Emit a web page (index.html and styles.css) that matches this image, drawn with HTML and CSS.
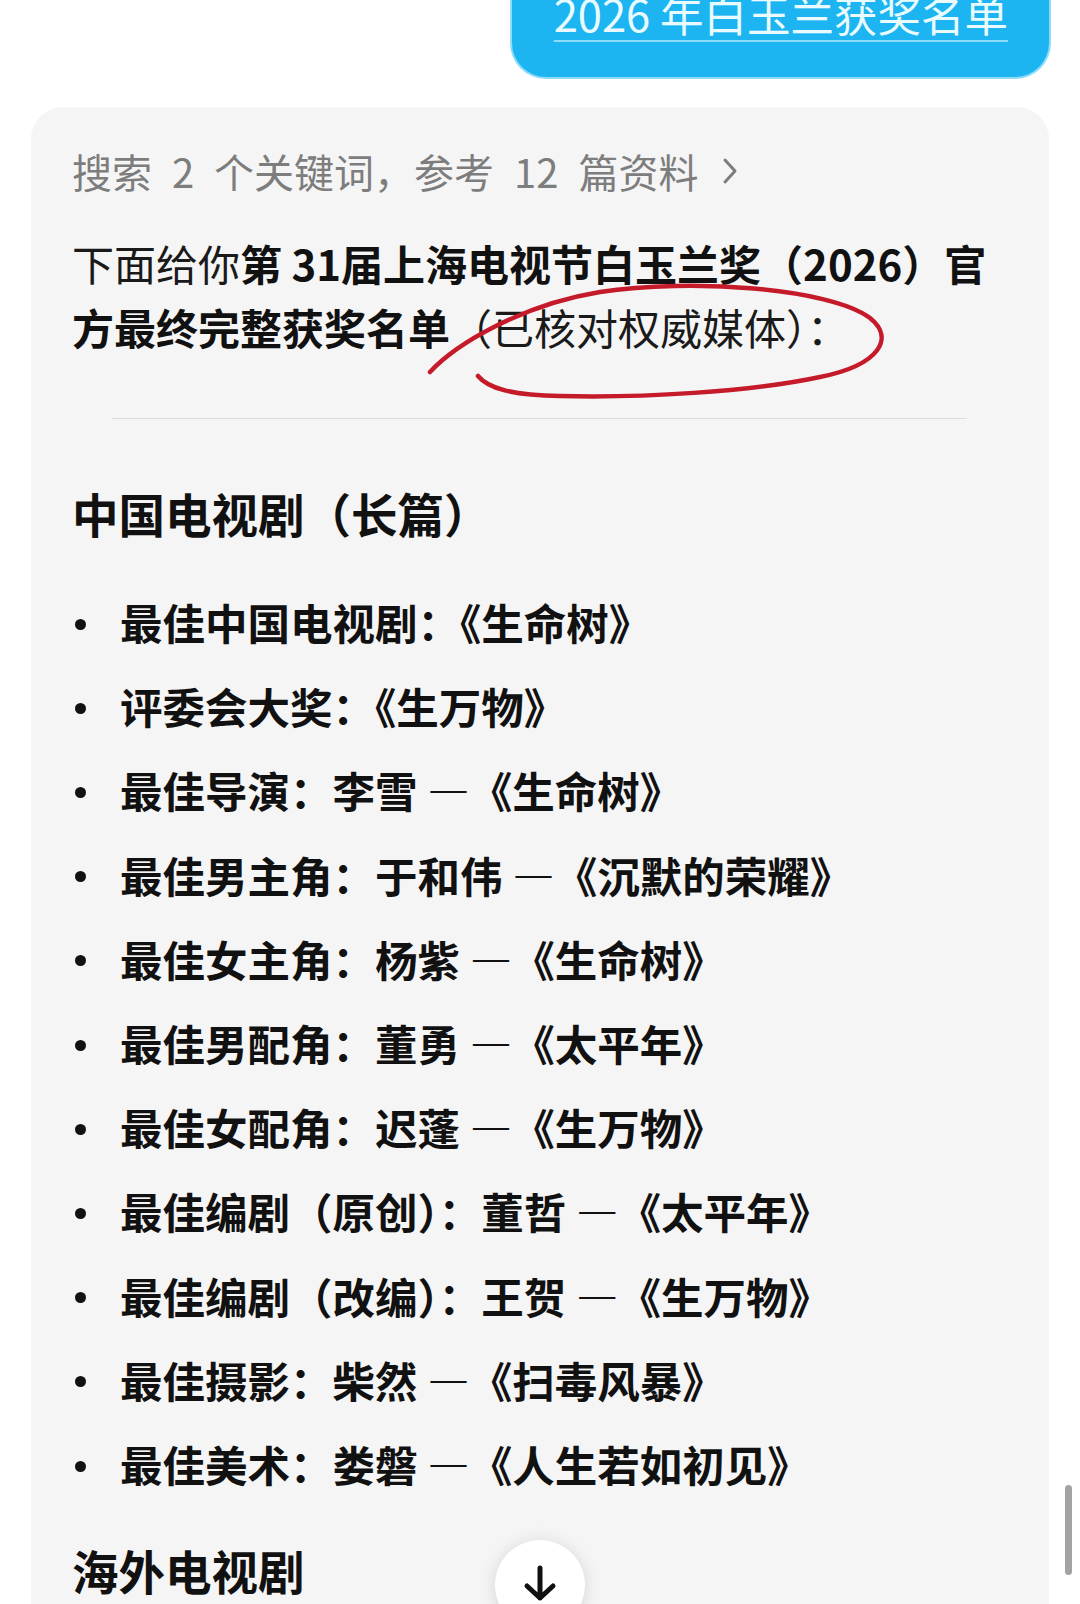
FILE: index.html
```html
<!DOCTYPE html>
<html lang="zh-CN">
<head>
  <meta charset="utf-8">
  <title>白玉兰获奖名单</title>
  <link rel="stylesheet" href="styles.css">
</head>
<body>
  <div class="thread">
    <div class="bubble"><span class="bubble-link">2026 年白玉兰获奖名单</span></div>

    <div class="card">
      <!-- hand-drawn circle around the source note -->
      <svg class="mark" width="1018" height="400" viewBox="31 107 1018 400">
        <path d="M430,372 C455,345 520,305 600,292 C690,278 830,288 870,318 C895,338 880,365 820,377 C750,392 640,398 560,396 C510,395 488,388 478,376"/>
      </svg>

      <div class="sources">搜索 2 个关键词，参考 12 篇资料
        <svg class="chev" width="16" height="28" viewBox="0 0 16 28"><polyline points="3,3 13,14 3,25"/></svg>
      </div>

      <p class="lead">下面给你<strong>第 31届上海电视节白玉兰奖（2026）官方最终完整获奖名单</strong>（已核对权威媒体）：</p>

      <hr class="rule">

      <h3 class="section">中国电视剧（长篇）</h3>
      <ul class="awards">
        <li>最佳中国电视剧：《生命树》</li>
        <li>评委会大奖：《生万物》</li>
        <li>最佳导演：李雪 —《生命树》</li>
        <li>最佳男主角：于和伟 —《沉默的荣耀》</li>
        <li>最佳女主角：杨紫 —《生命树》</li>
        <li>最佳男配角：董勇 —《太平年》</li>
        <li>最佳女配角：迟蓬 —《生万物》</li>
        <li>最佳编剧（原创）：董哲 —《太平年》</li>
        <li>最佳编剧（改编）：王贺 —《生万物》</li>
        <li>最佳摄影：柴然 —《扫毒风暴》</li>
        <li>最佳美术：娄磐 —《人生若如初见》</li>
      </ul>

      <h3 class="section">海外电视剧</h3>
    </div>
  </div>

  <button class="to-bottom" type="button">
    <svg width="90" height="90" viewBox="0 0 90 90"><path d="M45,28 V58 M32,46 L45,58 L58,46"/></svg>
  </button>
  <div class="scroll-thumb"></div>
</body>
</html>
```

FILE: styles.css
```css
html, body {
  margin: 0;
  height: 100%;
  overflow: hidden;
  background: #fff;
  font-family: "Noto Sans CJK SC", "Noto Sans", sans-serif;
  color: #111;
}

.thread {
  display: flex;
  flex-direction: column;
}

/* user message */
.bubble {
  align-self: flex-end;
  margin: -32px 31px 0 0;
  padding: 20px 41px 37px 42px;
  background: #1cb5f2;
  border-radius: 34px;
  box-shadow: 0 0 0 2px #8fdcfa;
  color: #e9fbff;
  font-size: 43.5px;
  line-height: 52px;
}

.bubble-link {
  text-decoration: underline;
  text-decoration-color: #8fdcfa;
  text-decoration-thickness: 2px;
  text-underline-offset: 8px;
}

/* assistant answer */
.card {
  position: relative;
  margin: 30px 31px 0;
  padding: 36px 41px 120px;
  background: #f5f5f5;
  border-radius: 32px;
}

.mark {
  position: absolute;
  left: 0;
  top: 0;
  pointer-events: none;
}

.mark path {
  fill: none;
  stroke: #c51a2a;
  stroke-width: 4.5;
  stroke-linecap: round;
}

.sources {
  display: flex;
  align-items: center;
  gap: 24px;
  font-size: 40px;
  line-height: 56px;
  word-spacing: 11px;
  color: #7d7d7d;
}

.chev polyline {
  fill: none;
  stroke: #7d7d7d;
  stroke-width: 3;
  stroke-linecap: round;
  stroke-linejoin: round;
}

.lead {
  margin: 32px 0 0;
  font-size: 42px;
  line-height: 64px;
  color: #1a1a1a;
}

.lead strong {
  font-weight: 700;
  color: #111;
}

.rule {
  margin: 59px 41px 0 40px;
  border: 0;
  border-top: 1px solid #dcdcdc;
}

.section {
  margin: 64px 0 0;
  font-size: 46.5px;
  line-height: 60px;
  font-weight: 700;
}

.awards {
  list-style: none;
  margin: 37px 0 0;
  padding: 0;
}

.awards li {
  display: flex;
  align-items: center;
  font-size: 42.5px;
  line-height: 84.2px;
  font-weight: 700;
}

.awards li::before {
  content: "";
  flex: none;
  width: 11px;
  height: 11px;
  margin: 4px 34px 0 3px;
  border-radius: 50%;
  background: #111;
}

.awards + .section {
  margin-top: 34px;
}

/* floating "jump to latest" button */
.to-bottom {
  position: absolute;
  left: 495px;
  top: 1540px;
  width: 90px;
  height: 90px;
  padding: 0;
  border: 0;
  border-radius: 50%;
  background: #fff;
  box-shadow: 0 2px 18px rgba(0, 0, 0, 0.13);
}

.to-bottom svg {
  display: block;
}

.to-bottom path {
  fill: none;
  stroke: #111;
  stroke-width: 5;
  stroke-linecap: round;
  stroke-linejoin: round;
}

.scroll-thumb {
  position: absolute;
  left: 1065px;
  top: 1485px;
  width: 7px;
  height: 90px;
  border-radius: 4px;
  background: #a3a3a3;
}
```
